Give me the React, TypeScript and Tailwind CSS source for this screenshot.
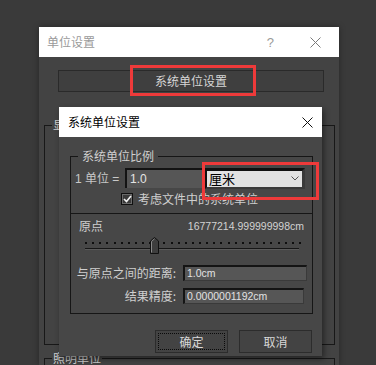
import React from "react";

const cjk = { fontFamily: '"Noto Sans CJK SC", "Liberation Sans", sans-serif' };
const num = { fontFamily: '"Liberation Sans", "Noto Sans CJK SC", sans-serif' };

function CloseIcon({ color }: { color: string }) {
  return (
    <svg width="11" height="11" viewBox="0 0 11 11" className="block">
      <path d="M0.5 0.5 L10.5 10.5 M10.5 0.5 L0.5 10.5" stroke={color} strokeWidth="1" fill="none" />
    </svg>
  );
}

function SunkenInput({ value, width }: { value: string; width: string }) {
  return (
    <div
      className={`${width} h-[16px] bg-[#565656] border-t-2 border-l-2 border-t-[#141414] border-l-[#141414] border-b border-r border-b-[#3a3a3a] border-r-[#3a3a3a] flex items-center pl-[2px] text-[10.5px] text-[#e2e2e2] leading-none`}
      style={num}
    >
      {value}
    </div>
  );
}

function Slider() {
  const dots: number[] = [];
  for (let i = 0; i <= 30; i++) dots.push(14 + i * 7.13);
  return (
    <svg width="240" height="17" viewBox="0 0 240 17" className="block">
      {dots.map((x, i) => (
        <rect key={i} x={Math.round(x)} y="5" width="2" height="2" fill="#0e0e0e" />
      ))}
      <rect x="14" y="11" width="214" height="1" fill="#161616" />
      <rect x="14" y="12" width="214" height="1" fill="#5a5a5a" />
      <path d="M79.5 16.5 L79.5 4 L83.5 0.5 L87.5 4 L87.5 16.5 Z" fill="#3e3e3e" stroke="#111" strokeWidth="1" />
      <path d="M80.5 15.5 L80.5 4.5 L83.5 1.8" fill="none" stroke="#8a8a8a" strokeWidth="1" />
    </svg>
  );
}

export default function App() {
  return (
    <div className="relative w-[376px] h-[365px] overflow-hidden bg-[#3a3a3a]" style={cjk}>
      {/* Outer dialog */}
      <div className="absolute left-[39px] top-[27px] w-[300px] h-[338px] bg-[#434343] shadow-[0_0_6px_rgba(0,0,0,0.35)]">
        <div className="h-[30px] bg-white flex items-center pl-[8px] pr-[18px]">
          <span className="text-[12px] leading-[14px] text-[#9a9a9a]">单位设置</span>
          <span className="ml-auto text-[13px] leading-none text-[#9a9a9a]" style={num}>?</span>
          <span className="ml-[36px]">
            <CloseIcon color="#7a7a7a" />
          </span>
        </div>
        <div className="pt-[13px]">
          <div className="ml-[19px] w-[266px] h-[22px] bg-[#3f3f3f] border border-[#2a2a2a] flex items-center justify-center text-[12px] text-[#d6d6d6] leading-none">
            系统单位设置
          </div>
          <fieldset className="mt-[26px] ml-[5px] w-[291px] h-[227px] border border-[#181818]">
            <legend className="ml-[7px] px-[1px] text-[12px] leading-[14px] text-[#cfcfcf]">显示单位比例</legend>
          </fieldset>
          <fieldset className="mt-[6px] ml-[5px] w-[291px] h-[40px] border border-[#181818]">
            <legend className="ml-[7px] px-[1px] text-[12px] leading-[14px] text-[#cfcfcf]">照明单位</legend>
          </fieldset>
        </div>
      </div>

      {/* Red highlight on outer button */}
      <div className="absolute left-[130px] top-[65px] w-[126px] h-[31px] border-[3px] border-[#ee3a3a]" />

      {/* Inner dialog */}
      <div className="absolute left-[59px] top-[107px] w-[263px] h-[249px] bg-[#474747] shadow-[2px_3px_6px_rgba(0,0,0,0.45)]">
        <div className="h-[30px] bg-white flex items-center pl-[9px] pr-[9px]">
          <span className="text-[12px] leading-[14px] text-black">系统单位设置</span>
          <span className="ml-auto">
            <CloseIcon color="#111" />
          </span>
        </div>
        <div className="pt-[12px]">
          <fieldset className="ml-[11px] w-[243px] h-[165px] border border-[#161616]">
            <legend className="ml-[7px] px-[4px] text-[12px] leading-[14px] text-[#cfcfcf]">系统单位比例</legend>
            {/* Row 1 */}
            <div className="mt-[5px] flex items-center h-[20px]">
              <div className="w-[54px] pl-[4px] text-[12px] leading-[14px] text-[#c8c8c8] whitespace-nowrap" style={num}>
                1 <span style={cjk}>单位</span> =
              </div>
              <div
                className="w-[79px] h-[20px] bg-[#565656] border-t-2 border-l-2 border-[#131313] border-b-0 border-r-0 flex items-center pl-[3px] text-[12px] text-[#e4e4e4] leading-none"
                style={num}
              >
                1.0
              </div>
              <div className="ml-[1px] w-[100px] h-[21px] bg-[#e2e2e2] border-t-[3px] border-l-[2px] border-b-[2px] border-r-[3px] border-t-[#111] border-l-[#111] border-b-[#3a3a3a] border-r-[#3a3a3a] flex items-center pl-[2px] pr-[3px]">
                <span className="text-[13px] leading-none text-black">厘米</span>
                <svg width="8" height="5" viewBox="0 0 8 5" className="ml-auto block">
                  <path d="M0.5 0.5 L4 4 L7.5 0.5" stroke="#555" strokeWidth="1" fill="none" />
                </svg>
              </div>
            </div>
            {/* Checkbox row */}
            <div className="mt-[5px] flex items-center h-[12px] pl-[50px]">
              <div className="w-[12px] h-[12px] border border-[#101010] bg-[#3a3a3a] flex items-center justify-center shadow-[inset_0_0_0_1px_#6a6a6a]">
                <svg width="9" height="8" viewBox="0 0 9 8" className="block">
                  <path d="M1 4 L3.5 6.5 L8 1" stroke="#f2f2f2" strokeWidth="1.6" fill="none" />
                </svg>
              </div>
              <span className="ml-[5px] text-[12px] leading-[14px] text-[#cfcfcf] whitespace-nowrap">考虑文件中的系统单位</span>
            </div>
            {/* Divider */}
            <div className="mt-[8px] border-t border-[#161616]" />
            {/* 原点 row */}
            <div className="mt-[5px] flex items-center h-[14px] pl-[8px] pr-[8px]">
              <span className="text-[12px] leading-[14px] text-[#cfcfcf]">原点</span>
              <span className="ml-auto text-[10.5px] leading-none text-[#d2d2d2]" style={num}>16777214.999999998cm</span>
            </div>
            {/* Slider */}
            <div className="mt-[4px]">
              <Slider />
            </div>
            {/* Distance row */}
            <div className="mt-[11px] flex items-center">
              <span className="w-[105px] text-right text-[12px] leading-[14px] text-[#cfcfcf] whitespace-nowrap">与原点之间的距离:</span>
              <span className="ml-[7px]">
                <SunkenInput value="1.0cm" width="w-[124px]" />
              </span>
            </div>
            {/* Precision row */}
            <div className="mt-[7px] flex items-center">
              <span className="w-[105px] text-right text-[12px] leading-[14px] text-[#cfcfcf] whitespace-nowrap">结果精度:</span>
              <span className="ml-[7px]">
                <SunkenInput value="0.0000001192cm" width="w-[121px]" />
              </span>
            </div>
          </fieldset>
          {/* Buttons */}
          <div className="mt-[16px] flex pl-[96px] gap-[11px]">
            <div className="relative w-[73px] h-[23px] bg-[#434343] border border-[#2c2c2c] flex items-center justify-center text-[12px] text-[#d8d8d8] leading-none">
              <div className="absolute left-[2px] top-[2px] right-[2px] bottom-[2px] border border-dotted border-[#0a0a0a]" />
              确定
            </div>
            <div className="w-[73px] h-[23px] bg-[#434343] border border-[#2c2c2c] flex items-center justify-center text-[12px] text-[#d8d8d8] leading-none">
              取消
            </div>
          </div>
        </div>
      </div>

      {/* Red highlight on dropdown */}
      <div className="absolute left-[202px] top-[162px] w-[117px] h-[38px] border-[3px] border-[#ee3a3a]" />
    </div>
  );
}
